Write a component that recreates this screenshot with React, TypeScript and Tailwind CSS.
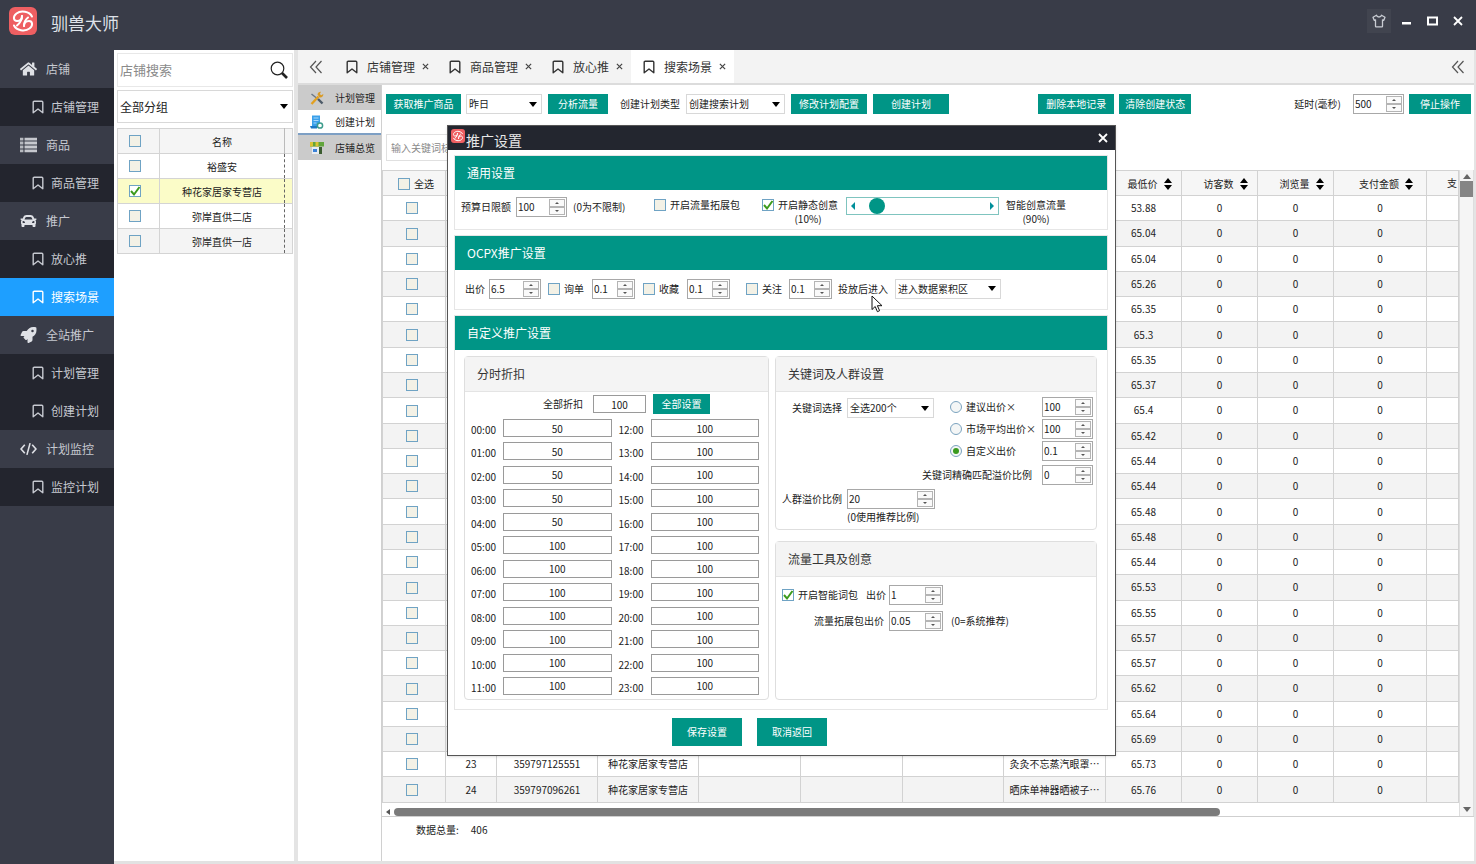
import React, { useState } from "react";
import clsx from "clsx";
import { FaHome, FaCar, FaRocket } from "react-icons/fa";

type IconProps = { className?: string };

const BookmarkIcon = ({ className }: IconProps) => (
  <svg viewBox="0 0 12 14" className={clsx("h-[14px] w-3 shrink-0", className)} fill="none" stroke="currentColor" strokeWidth="1.4">
    <path d="M1.2 12.8V2.2c0-.6.4-1 1-1h7.6c.6 0 1 .4 1 1v10.6L6 9z" strokeLinejoin="round" />
  </svg>
);

const ListIcon = ({ className }: IconProps) => (
  <svg viewBox="0 0 15 13" className={className} fill="currentColor">
    <path d="M0 0h3v2.500H0zM0 3.500h3V6H0zM0 7h3v2.500H0zM0 10.500h3V13H0z" opacity=".75" />
    <path d="M4 0h11v2.500H4zM4 3.500h11V6H4zM4 7h11v2.500H4zM4 10.500h11V13H4z" opacity=".85" />
  </svg>
);

const CodeIcon = ({ className }: IconProps) => (
  <svg viewBox="0 0 16 14" className={className} fill="none" stroke="currentColor" strokeWidth="1.500">
    <path d="M4.500 3L1 7l3.500 4M11.500 3L15 7l-3.500 4M9.500 1.500l-3 11" />
  </svg>
);

const DoubleLeftIcon = () => (
  <svg viewBox="0 0 14 14" className="size-[14px]" fill="none" stroke="#555" strokeWidth="1.2">
    <path d="M7 1L1.5 7 7 13M12.500 1L7 7l5.500 6" />
  </svg>
);

const LogoIcon = ({ className }: IconProps) => (
  <svg viewBox="0 0 28 28" className={clsx("shrink-0", className)}>
    <rect width="28" height="28" rx="6" fill="#ee5f62" />
    <g fill="none" stroke="#fff" strokeWidth="2" strokeLinecap="round">
      <path d="M23 9.500C20.500 4.500 12 3 7.500 6.500c-4 3.200-3 7.500.5 7.500 3 0 5-2 5-5" />
      <path d="M5 18.500c2.500 5 11 6.500 15.500 3 4-3.200 3-7.500-.5-7.500-3 0-5 2-5 5" />
      <path d="M13 9c0 4-2 7-5 9.500" />
      <path d="M15 19c0-4 1-6 4-8.500" />
    </g>
  </svg>
);

const ShirtIcon = () => (
  <svg viewBox="0 0 14 14" className="size-[14px]" fill="none" stroke="#c9ccd3" strokeWidth="1.300" strokeLinejoin="round">
    <path d="M4.500 1.200L1 3.300l1.200 3 1.300-.5v6.400c0 .4.3.6.6.6h5.800c.3 0 .6-.2.6-.6V5.800l1.300.5 1.200-3-3.500-2.100C9 3.600 5 3.600 4.500 1.200z" />
  </svg>
);

const SearchIcon = () => (
  <svg viewBox="0 0 18 18" className="size-[18px]" fill="none" stroke="#222">
    <circle cx="7.500" cy="7.500" r="6.300" strokeWidth="1.200" />
    <path d="M12 12l5 5" strokeWidth="2.600" />
  </svg>
);

const WrenchIcon = () => (
  <svg viewBox="0 0 14 14" className="size-[14px]">
    <path d="M1.500 3L6.500 7" stroke="#6b7785" strokeWidth="1.500" />
    <path d="M1.500 13L8.500 5.500" stroke="#e2a020" strokeWidth="2.400" />
    <path d="M7.500 3.500A3.300 3.300 0 0 1 11 .8L9.800 3l1.400 1.200L13.300 3c.3 2.200-1.600 3.900-3.700 3.400z" fill="#d99a25" />
    <path d="M8 8l4.500 4.500" stroke="#4d5a68" strokeWidth="2.400" />
  </svg>
);

const PlanIcon = () => (
  <svg viewBox="0 0 14 14" className="size-[14px]">
    <path d="M2 .5h8v12H2z" fill="#3aa0ea" />
    <path d="M3.500 3h5M3.500 5.500h5M3.500 8h3" stroke="#a9d8fb" />
    <path d="M0 11h7v2.500H1z" fill="#1d78c4" />
    <circle cx="10" cy="10.500" r="2.600" fill="#fff" stroke="#3c9c8c" strokeWidth="1.500" />
  </svg>
);

const ShopIcon = () => (
  <svg viewBox="0 0 14 14" className="size-[14px]">
    <path d="M2 6h10v7H2z" fill="#e9edf2" />
    <path d="M0 1h14v4.500H0z" fill="#61a53c" />
    <path d="M0 1h3v4.500H0zM5.500 1h3v4.500h-3z" fill="#d9c234" />
    <path d="M3 8h4v3H3z" fill="#3b82d8" />
    <path d="M9 6h3v7H9z" fill="#3b5c31" />
  </svg>
);

const SortIcon = () => (
  <svg viewBox="0 0 8 12" className="h-3 w-2 shrink-0" fill="#000">
    <path d="M4 0l4 5H0zM4 12l4-5H0z" />
  </svg>
);

interface SelectProps {
  label: string;
  options: string[];
  className?: string;
  fontClass?: string;
}

function Select({ label, options, className, fontClass = "text-[10px]" }: SelectProps) {
  return (
    <span className={clsx("grid items-center border border-[#d8d8d8] bg-white", className)}>
      <select
        aria-label={label}
        className={clsx("col-start-1 row-start-1 h-full w-full min-w-0 appearance-none bg-transparent pl-[2px] text-[#222] outline-none", fontClass)}
      >
        {options.map((o) => (
          <option key={o}>{o}</option>
        ))}
      </select>
      <svg viewBox="0 0 8 5" className="pointer-events-none col-start-1 row-start-1 mr-1 h-[5px] w-2 justify-self-end">
        <path d="M0 0h8L4 5z" fill="#000" />
      </svg>
    </span>
  );
}

interface SpinnerProps {
  label: string;
  value: string;
  className?: string;
}

function Spinner({ label, value, className }: SpinnerProps) {
  const [val, setVal] = useState(value);
  const step = (d: number) => setVal(String(Number(val) + d));
  const btn = "flex flex-1 items-center justify-center border border-[#b4b4b4] bg-[#fafafa]";
  return (
    <span className={clsx("flex h-5 shrink-0 border border-[#a8a8a8] bg-white p-px", className)}>
      <input
        aria-label={label}
        value={val}
        onChange={(e) => setVal(e.target.value)}
        className="w-0 min-w-0 flex-1 text-[10px] leading-3 text-[#222] outline-none"
      />
      <span className="flex w-4 flex-col">
        <button aria-label="增加" className={btn} onClick={() => step(1)}>
          <svg viewBox="0 0 4 2" className="h-[2px] w-1"><path d="M2 0l2 2H0z" fill="#555" /></svg>
        </button>
        <button aria-label="减少" className={btn} onClick={() => step(-1)}>
          <svg viewBox="0 0 4 2" className="h-[2px] w-1"><path d="M0 0h4L2 2z" fill="#555" /></svg>
        </button>
      </span>
    </span>
  );
}

interface CheckProps {
  checked?: boolean;
  label?: string;
  children?: React.ReactNode;
  className?: string;
}

function Check({ checked = false, label, children, className }: CheckProps) {
  return (
    <label className={clsx("inline-flex items-center gap-1", className)}>
      <span className="grid place-items-center">
        <input
          type="checkbox"
          defaultChecked={checked}
          aria-label={label}
          className="peer col-start-1 row-start-1 size-3 appearance-none border border-[#6fa3c4] bg-[#f3f1e6] checked:bg-white"
        />
        <svg viewBox="0 0 12 12" className="pointer-events-none invisible col-start-1 row-start-1 size-3 peer-checked:visible" fill="none" stroke="#3d9a1c" strokeWidth="2">
          <path d="M2 6l3 3.500L10.500 2" />
        </svg>
      </span>
      {children}
    </label>
  );
}

function Radio({ checked = false, children }: CheckProps) {
  return (
    <label className="flex items-center gap-1">
      <span className="grid place-items-center">
        <input
          type="radio"
          name="bid-mode"
          defaultChecked={checked}
          className="peer col-start-1 row-start-1 size-3 appearance-none rounded-full border border-[#7ba3bf] bg-[#f4f6f6]"
        />
        <span className="pointer-events-none invisible col-start-1 row-start-1 size-[6px] rounded-full bg-[#3a9a1e] peer-checked:visible" />
      </span>
      {children}
    </label>
  );
}

function TealButton({ children, className }: { children: React.ReactNode; className?: string }) {
  return (
    <button className={clsx("shrink-0 bg-[#009586] text-center text-[10px] leading-none text-white", className)}>
      {children}
    </button>
  );
}

const menu = [
  { label: "店铺", icon: FaHome },
  { label: "店铺管理" },
  { label: "商品", icon: ListIcon },
  { label: "商品管理" },
  { label: "推广", icon: FaCar },
  { label: "放心推" },
  { label: "搜索场景", active: true },
  { label: "全站推广", icon: FaRocket },
  { label: "计划管理" },
  { label: "创建计划" },
  { label: "计划监控", icon: CodeIcon },
  { label: "监控计划" },
];

function Sidebar() {
  return (
    <nav className="w-[114px] shrink-0 bg-[#393c48] text-xs text-[#c6c9d0]">
      {menu.map(({ label, icon: Icon, active }) => (
        <a
          key={label}
          href="#"
          className={clsx(
            "flex h-[38px] items-center",
            Icon ? "gap-[9px] pl-5" : "gap-[7px] pl-8",
            active ? "bg-[#1e9fff] text-white" : !Icon && "bg-[#23252e]"
          )}
        >
          {Icon ? <Icon className="h-4 w-[17px] text-[#dfe1e6]" /> : <BookmarkIcon />}
          {label}
        </a>
      ))}
    </nav>
  );
}

const shops = [
  { name: "裕盛安" },
  { name: "种花家居家专营店", selected: true },
  { name: "弥岸直供二店" },
  { name: "弥岸直供一店" },
];

function ShopPanel() {
  return (
    <aside className="flex w-[184px] shrink-0 flex-col border-r-4 border-[#e4e4e4] bg-white pl-[3px] pr-px pt-[3px]">
      <div className="flex h-[34px] items-center justify-between border border-[#e8e8e8] pr-1">
        <input aria-label="店铺搜索" placeholder="店铺搜索" className="w-32 pl-[2px] text-[13px] outline-none placeholder:text-[#8a8a8a]" />
        <button aria-label="搜索"><SearchIcon /></button>
      </div>
      <Select label="分组" options={["全部分组"]} className="mt-[3px] h-[33px]" fontClass="text-xs" />
      <table className="mt-[5px] w-full table-fixed border-collapse text-center text-[10px] text-[#222]">
        <colgroup>
          <col className="w-[42px]" />
          <col />
          <col className="w-2" />
        </colgroup>
        <thead>
          <tr className="h-[25px] border border-[#d4d4d4] bg-[#f5f5f5]">
            <th className="border border-[#d4d4d4] py-0 pl-0 pr-[7px] font-normal leading-none"><Check label="全选店铺" className="align-middle" /></th>
            <th className="p-0 font-normal">名称</th>
            <th className="border-l border-[#bbb] p-0" />
          </tr>
        </thead>
        <tbody>
          {shops.map((s, i) => (
            <tr key={s.name} className={clsx("h-[25px] border border-[#d4d4d4]", s.selected ? "bg-[#fbfcc8]" : i === 3 && "bg-[#f4f4f4]")}>
              <td className="border border-[#d4d4d4] py-0 pl-0 pr-[7px] leading-none"><Check label={s.name} checked={s.selected} className="align-middle" /></td>
              <td className="p-0">{s.name}</td>
              <td className="border-l border-dashed border-[#666] p-0" />
            </tr>
          ))}
        </tbody>
      </table>
    </aside>
  );
}

const tabs = ["店铺管理", "商品管理", "放心推", "搜索场景"];

function TabBar() {
  return (
    <div className="flex h-[35px] shrink-0 items-stretch border-b-2 border-[#dcdcdc] bg-[#f3f3f3] text-xs text-[#333]">
      <button aria-label="向左滚动" className="w-9 pl-[11px]"><DoubleLeftIcon /></button>
      {tabs.map((t, i) => (
        <div key={t} className={clsx("flex items-center pl-3 pr-2", i === 3 && "bg-white")}>
          <a href="#" className="flex items-center gap-[9px]">
            <BookmarkIcon />
            {t}
          </a>
          <button aria-label={`关闭${t}`} className="ml-[7px]">
            <svg viewBox="0 0 8 8" className="size-[7px]" stroke="#444" strokeWidth="1.400"><path d="M1 1l6 6M7 1L1 7" /></svg>
          </button>
        </div>
      ))}
      <button aria-label="折叠" className="ml-auto pr-[9px]"><DoubleLeftIcon /></button>
    </div>
  );
}

function SubNav() {
  const item = "flex h-[25px] items-center gap-[11px] pl-3";
  return (
    <div className="w-[84px] shrink-0 border-r border-[#d0d0d0] text-[10px] text-[#222]">
      <a href="#" className={clsx(item, "bg-[#cbcbcb]")}><WrenchIcon />计划管理</a>
      <a href="#" className={clsx(item, "border-b-2 border-[#7d9fc4] bg-white")}><PlanIcon />创建计划</a>
      <a href="#" className={clsx(item, "bg-[#cbcbcb]")}><ShopIcon />店铺总览</a>
    </div>
  );
}

function Toolbar() {
  return (
    <div className="flex h-[85px] shrink-0 flex-col gap-5 pl-1 pr-[3px] pt-[9px]">
      <div className="flex h-5 items-center">
        <TealButton className="h-5 w-[75px]">获取推广商品</TealButton>
        <Select label="日期" options={["昨日"]} className="ml-[5px] h-5 w-[76px]" />
        <TealButton className="ml-[6px] h-5 w-[60px]">分析流量</TealButton>
        <label className="ml-3 flex items-center gap-[6px] whitespace-nowrap">
          创建计划类型
          <Select label="创建计划类型" options={["创建搜索计划"]} className="h-5 w-[99px]" />
        </label>
        <TealButton className="ml-[6px] h-5 w-[76px]">修改计划配置</TealButton>
        <TealButton className="ml-[6px] h-5 w-[76px]">创建计划</TealButton>
        <div className="ml-auto flex items-center">
          <TealButton className="h-5 w-[76px]">删除本地记录</TealButton>
          <TealButton className="ml-[5px] h-5 w-[72px]">清除创建状态</TealButton>
          <span className="ml-[103px] whitespace-nowrap">延时(毫秒)</span>
          <Spinner label="延时(毫秒)" value="500" className="ml-3 w-[51px]" />
          <TealButton className="ml-[5px] h-5 w-[62px]">停止操作</TealButton>
        </div>
      </div>
      <input
        aria-label="关键词"
        placeholder="输入关键词标题"
        className="h-[27px] w-[200px] border border-[#e0e0e0] pl-1 text-[10px] outline-none placeholder:text-[#8a8a8a]"
      />
    </div>
  );
}

const prices = [
  "53.88", "65.04", "65.04", "65.26", "65.35", "65.3", "65.35", "65.37",
  "65.4", "65.42", "65.44", "65.44", "65.48", "65.48", "65.44", "65.53",
  "65.55", "65.57", "65.57", "65.62", "65.64", "65.69", "65.73", "65.76",
];

const details: Record<number, { id: string; shop: string; title: string }> = {
  23: { id: "359797125551", shop: "种花家居家专营店", title: "灸灸不忘蒸汽眼罩…" },
  24: { id: "359797096261", shop: "种花家居家专营店", title: "晒床单神器晒被子…" },
};

const sortable = ["最低价", "访客数", "浏览量", "支付金额"];

function GoodsTable() {
  const cell = "border border-[#d2d2d2] p-0";
  return (
    <div className="flex min-h-0 flex-1 border-b border-[#cfcfcf]">
      <div className="flex min-w-0 flex-1 flex-col">
        <table className="w-full flex-1 table-fixed border-collapse text-center text-[10px] leading-3 text-[#222]">
          <colgroup>
            <col className="w-[63px]" />
            <col className="w-[51px]" />
            <col className="w-[101px]" />
            <col className="w-[101px]" />
            <col className="w-[102px]" />
            <col className="w-[102px]" />
            <col className="w-[101px]" />
            <col className="w-[102px]" />
            <col className="w-[76px]" />
            <col className="w-[76px]" />
            <col className="w-[76px]" />
            <col className="w-[93px]" />
            <col />
          </colgroup>
          <thead>
            <tr className="h-[25px] bg-[#f6f6f6]">
              <th className={clsx(cell, "font-normal")}><Check className="pl-1 align-middle">全选</Check></th>
              {[1, 2, 3, 4, 5, 6, 7].map((n) => <th key={n} className={cell} />)}
              {sortable.map((s) => (
                <th key={s} className={clsx(cell, "font-normal")}>
                  <button className="inline-flex items-center gap-[6px] pl-3 align-middle">{s}<SortIcon /></button>
                </th>
              ))}
              <th className="border border-[#d2d2d2] py-0 pl-5 pr-0 text-left font-normal">支</th>
            </tr>
          </thead>
          <tbody>
            {prices.map((p, i) => {
              const d = details[i + 1];
              return (
                <tr key={i} className={clsx(i % 2 === 1 && "bg-[#f3f3f3]")}>
                  <td className={clsx(cell, "leading-none")}><Check label={`第${i + 1}行`} className="pr-1 align-middle" /></td>
                  <td className={cell}>{d && i + 1}</td>
                  <td className={cell}>{d?.id}</td>
                  <td className={cell}>{d?.shop}</td>
                  <td className={cell} />
                  <td className={cell} />
                  <td className={cell} />
                  <td className={clsx(cell, "whitespace-nowrap")}>{d?.title}</td>
                  <td className={cell}>{p}</td>
                  <td className={cell}>0</td>
                  <td className={cell}>0</td>
                  <td className={cell}>0</td>
                  <td className={cell} />
                </tr>
              );
            })}
          </tbody>
        </table>
        <div className="flex h-[13px] shrink-0 items-center gap-1 pl-1 pt-1">
          <svg viewBox="0 0 4 6" className="h-[6px] w-1"><path d="M4 0v6L0 3z" fill="#555" /></svg>
          <div className="h-2 w-[77%] rounded-full bg-[#7b7b7b]" />
        </div>
      </div>
      <div className="flex w-[15px] shrink-0 flex-col items-center border-x border-[#dedede] bg-[#f5f5f5] py-1">
        <svg viewBox="0 0 8 5" className="h-[5px] w-2"><path d="M4 0l4 5H0z" fill="#666" /></svg>
        <div className="mt-[2px] h-4 w-[13px] bg-[#858585]" />
        <svg viewBox="0 0 8 5" className="mt-auto h-[5px] w-2"><path d="M0 0h8L4 5z" fill="#666" /></svg>
      </div>
    </div>
  );
}

function Section({ title, children }: { title: string; children: React.ReactNode }) {
  return (
    <section className="border border-[#e6e6e6]">
      <h2 className="flex h-[34px] items-center bg-[#009586] pl-3 text-xs text-white">{title}</h2>
      {children}
    </section>
  );
}

function Card({ title, children, className }: { title: string; children: React.ReactNode; className?: string }) {
  return (
    <div className={clsx("flex flex-col rounded-sm border border-[#dedede]", className)}>
      <h3 className="flex h-[35px] shrink-0 items-center border-b border-[#e4e4e4] bg-[#f4f4f4] pl-3 text-xs text-[#333]">{title}</h3>
      {children}
    </div>
  );
}

const hours = Array.from({ length: 12 }, (_, h) => [h, h + 12]);
const pad = (h: number) => `${String(h).padStart(2, "0")}:00`;

function HourlyCard() {
  const field = "border border-[#9a9a9a] bg-white text-center text-[10px] leading-none outline-none";
  return (
    <Card title="分时折扣" className="w-[305px] shrink-0">
      <div className="flex items-center pl-[78px] pt-[2px]">
        <label className="flex items-center gap-[10px]">
          全部折扣
          <input defaultValue="100" className={clsx(field, "h-[18px] w-[53px]")} />
        </label>
        <TealButton className="ml-[7px] h-5 w-[57px]">全部设置</TealButton>
      </div>
      <div className="flex flex-1 flex-col justify-between pb-1 pl-[6px] pr-[9px] pt-[5px]">
        {hours.map((pair) => (
          <div key={pair[0]} className="flex gap-[7px]">
            {pair.map((h) => (
              <label key={h} className="flex flex-1 items-center">
                <span className="w-8 pt-1">{pad(h)}</span>
                <input defaultValue={h < 5 ? "50" : "100"} className={clsx(field, "h-[18px] w-0 flex-1")} />
              </label>
            ))}
          </div>
        ))}
      </div>
    </Card>
  );
}

const bidModes = [
  { label: "建议出价×", value: "100" },
  { label: "市场平均出价×", value: "100" },
  { label: "自定义出价", value: "0.1", checked: true },
];

function KeywordCard() {
  return (
    <Card title="关键词及人群设置" className="h-[174px]">
      <div className="flex justify-between pl-4 pr-[3px] pt-[5px]">
        <label className="flex h-[22px] items-center gap-[5px]">
          关键词选择
          <Select label="关键词选择" options={["全选200个"]} className="h-5 w-[87px]" />
        </label>
        <div className="flex w-[143px] flex-col gap-[2px]">
          {bidModes.map((m) => (
            <div key={m.label} className="flex items-center justify-between">
              <Radio checked={m.checked}>{m.label}</Radio>
              <Spinner label={m.label} value={m.value} className="w-[51px]" />
            </div>
          ))}
        </div>
      </div>
      <div className="flex items-center justify-end gap-[10px] pr-[3px] pt-1">
        关键词精确匹配溢价比例
        <Spinner label="关键词精确匹配溢价比例" value="0" className="w-[51px]" />
      </div>
      <div className="flex items-center gap-[5px] pl-[6px] pt-1">
        人群溢价比例
        <Spinner label="人群溢价比例" value="20" className="w-[88px]" />
      </div>
      <p className="pl-[71px] pt-[2px] leading-3">(0使用推荐比例)</p>
    </Card>
  );
}

function TrafficCard() {
  return (
    <Card title="流量工具及创意" className="mt-[11px] flex-1">
      <div className="flex items-center pl-[6px] pt-2">
        <Check checked>开启智能词包</Check>
        <span className="ml-2">出价</span>
        <Spinner label="智能词包出价" value="1" className="ml-[3px] w-[54px]" />
      </div>
      <div className="flex items-center pl-[38px] pt-[6px]">
        流量拓展包出价
        <Spinner label="流量拓展包出价" value="0.05" className="ml-[5px] w-[54px]" />
        <span className="ml-2">(0=系统推荐)</span>
      </div>
    </Card>
  );
}

function SettingsDialog() {
  return (
    <div role="dialog" aria-label="推广设置" className="absolute left-[447px] top-[125px] w-[669px] border border-[#555] bg-white text-[10px] leading-[14px] text-[#222] shadow-sm">
      <div className="flex h-6 items-center bg-[#23262f] pl-[3px] pr-[7px]">
        <LogoIcon className="mb-1 size-[14px]" />
        <span className="ml-px pt-1 text-[14px] text-[#e8e8e8]">推广设置</span>
        <button aria-label="关闭" className="ml-auto">
          <svg viewBox="0 0 10 10" className="size-[10px]" stroke="#fff" strokeWidth="1.800"><path d="M1 1l8 8M9 1L1 9" /></svg>
        </button>
      </div>
      <div className="flex flex-col gap-[5px] pl-[6px] pr-[7px] pt-[5px]">
        <Section title="通用设置">
          <div className="flex h-[39px] items-start pl-[6px] pt-[7px]">
            <span className="flex h-5 items-center">预算日限额</span>
            <Spinner label="预算日限额" value="100" className="ml-[5px] w-[51px]" />
            <span className="ml-[6px] flex h-5 w-[81px] items-center">(0为不限制)</span>
            <Check className="h-4">开启流量拓展包</Check>
            <div className="ml-[22px] flex flex-col">
              <Check checked className="h-4">开启静态创意</Check>
              <span className="pl-4 text-center leading-3">(10%)</span>
            </div>
            <div className="ml-2 flex h-[18px] w-[153px] items-center border border-[#7fc4bf] px-1">
              <svg viewBox="0 0 4 8" className="h-2 w-1"><path d="M4 0v8L0 4z" fill="#008f9a" /></svg>
              <input
                type="range"
                aria-label="创意流量比例"
                defaultValue={10}
                className="mx-[2px] h-4 min-w-0 flex-1 appearance-none bg-transparent [&::-webkit-slider-thumb]:size-4 [&::-webkit-slider-thumb]:appearance-none [&::-webkit-slider-thumb]:rounded-full [&::-webkit-slider-thumb]:bg-[#009586]"
              />
              <svg viewBox="0 0 4 8" className="h-2 w-1"><path d="M0 0v8l4-4z" fill="#008f9a" /></svg>
            </div>
            <div className="ml-[7px] flex flex-col text-center">
              <span className="leading-4">智能创意流量</span>
              <span className="leading-3">(90%)</span>
            </div>
          </div>
        </Section>
        <Section title="OCPX推广设置">
          <div className="flex h-[39px] items-center pb-[2px] pl-[10px]">
            出价
            <Spinner label="出价" value="6.5" className="ml-1 w-[52px]" />
            <Check className="ml-[7px]">询单</Check>
            <Spinner label="询单" value="0.1" className="ml-2 w-[43px]" />
            <Check className="ml-2">收藏</Check>
            <Spinner label="收藏" value="0.1" className="ml-2 w-[43px]" />
            <Check className="ml-4">关注</Check>
            <Spinner label="关注" value="0.1" className="ml-[7px] w-[43px]" />
            <span className="ml-[6px]">投放后进入</span>
            <Select label="投放后进入" options={["进入数据累积区"]} className="ml-[7px] h-5 w-[106px]" />
          </div>
        </Section>
        <Section title="自定义推广设置">
          <div className="flex gap-[6px] pb-[9px] pl-[9px] pr-[10px] pt-[6px]">
            <HourlyCard />
            <div className="flex h-[344px] min-w-0 flex-1 flex-col">
              <KeywordCard />
              <TrafficCard />
            </div>
          </div>
        </Section>
      </div>
      <div className="flex gap-[15px] pb-[9px] pl-[224px] pt-2">
        <TealButton className="h-7 w-[70px]">保存设置</TealButton>
        <TealButton className="h-7 w-[70px]">取消返回</TealButton>
      </div>
    </div>
  );
}

export default function App() {
  return (
    <div className="relative flex h-screen flex-col overflow-hidden bg-[#e2e2e2] font-['Noto_Sans_CJK_SC','Liberation_Sans',sans-serif]">
      <header className="flex h-[50px] shrink-0 items-center bg-[#393c48] pb-1 pl-[9px] pr-[13px]">
        <LogoIcon className="mb-1 size-7" />
        <h1 className="ml-[14px] text-[17px] text-[#dfe2e8]">驯兽大师</h1>
        <div className="ml-auto flex items-center gap-[15px] pb-1">
          <button aria-label="换肤" className="-mr-1 flex size-6 items-center justify-center bg-[#41444f]"><ShirtIcon /></button>
          <button aria-label="最小化" className="pt-1"><svg viewBox="0 0 10 10" className="size-[10px]"><path d="M0 4h9v2.500H0z" fill="#fff" /></svg></button>
          <button aria-label="最大化"><svg viewBox="0 0 11 10" className="h-[10px] w-[11px]" fill="none" stroke="#fff" strokeWidth="2"><path d="M1 1.500h9v7H1z" /></svg></button>
          <button aria-label="关闭窗口"><svg viewBox="0 0 10 10" className="size-[10px]" stroke="#fff" strokeWidth="1.800"><path d="M1 1l8 8M9 1L1 9" /></svg></button>
        </div>
      </header>
      <div className="flex min-h-0 flex-1">
        <Sidebar />
        <div className="flex min-w-0 flex-1 pb-[3px]">
          <ShopPanel />
          <main className="flex min-w-0 flex-1 flex-col border-r-2 border-[#e4e4e4] bg-white">
            <TabBar />
            <div className="flex min-h-0 flex-1">
              <SubNav />
              <div className="flex min-w-0 flex-1 flex-col text-[10px] leading-[14px] text-[#222]">
                <Toolbar />
                <GoodsTable />
                <footer className="h-11 shrink-0 pl-[34px] pt-[6px]">
                  数据总量:<span className="ml-3">406</span>
                </footer>
              </div>
            </div>
          </main>
        </div>
      </div>
      <SettingsDialog />
      <svg viewBox="0 0 12 18" className="pointer-events-none absolute left-[871px] top-[295px] h-[18px] w-3">
        <path d="M1 1v13.500l3.200-3 2.200 5.200 2.200-1-2.200-5H11z" fill="#fff" stroke="#111" />
      </svg>
    </div>
  );
}
